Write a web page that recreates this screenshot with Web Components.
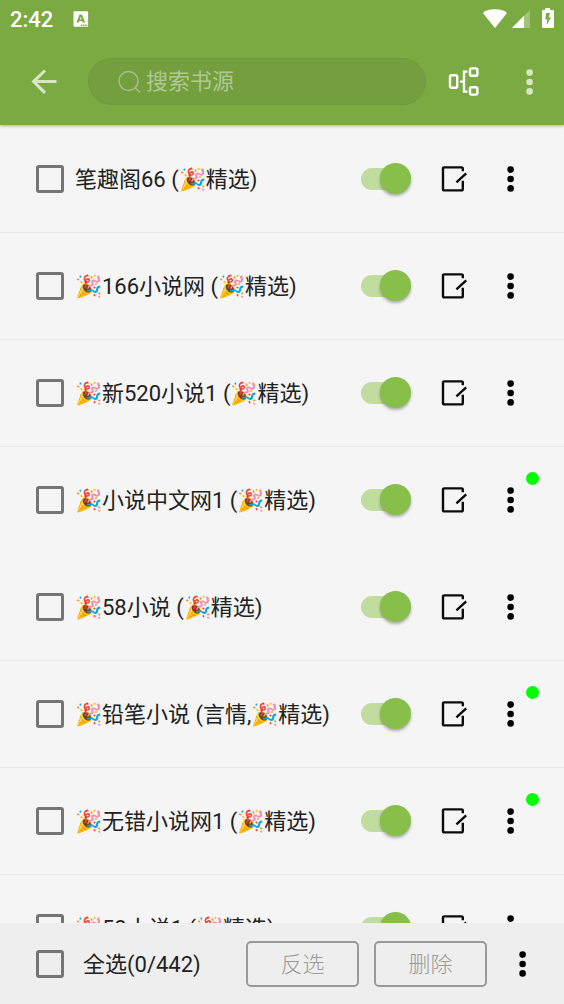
<!DOCTYPE html>
<html lang="zh-CN">
<head>
<meta charset="utf-8">
<meta name="viewport" content="width=device-width, initial-scale=1">
<title>书源管理</title>
<style>
  html, body { height: 100%; }
  body {
    margin: 0;
    background: #f5f5f5;
    color: #212121;
    font: 22px/32px Roboto, "Noto Sans CJK SC", sans-serif;
  }
</style>
</head>
<body>
<source-page></source-page>

<script>
const define = (name, html, setup) => {
  const template = document.createElement('template');
  template.innerHTML = html;
  customElements.define(name, class extends HTMLElement {
    connectedCallback() {
      if (this.shadowRoot) return;
      this.attachShadow({ mode: 'open' }).append(template.content.cloneNode(true));
      if (setup) setup(this, this.shadowRoot);
    }
  });
};

define('more-button', `
<style>
  :host { display: block; flex: none; }
  button { display: flex; align-items: center; justify-content: center; width: 32px; height: 48px; padding: 0; border: 0; background: none; color: inherit; cursor: pointer; }
</style>
<button type="button" aria-label="更多">
  <svg width="8" height="26" viewBox="0 0 8 26" fill="currentColor" aria-hidden="true">
    <circle cx="3.6" cy="3.6" r="3.3"/><circle cx="3.6" cy="13" r="3.3"/><circle cx="3.6" cy="22.4" r="3.3"/>
  </svg>
</button>`);

define('tick-box', `
<style>
  :host { display: block; min-width: 0; }
  label { display: flex; align-items: center; gap: var(--tick-gap, 11px); white-space: nowrap; }
  input { appearance: none; flex: none; box-sizing: border-box; width: 28px; height: 28px; margin: 0; border: 3px solid #757575; border-radius: 3px; }
  input:checked { background: #8bc34a; border-color: #8bc34a; }
  span { padding-top: 2px; }
</style>
<label><input type="checkbox"><span><slot></slot></span></label>`);

define('toggle-switch', `
<style>
  :host { display: block; flex: none; }
  input { appearance: none; display: flex; align-items: center; position: relative; width: 50px; height: 32px; margin: 0; }
  input::before { content: ""; width: 46px; height: 22px; border-radius: 11px; background: #c0dc9f; }
  input::after { content: ""; position: absolute; right: 0; top: 0; width: 31px; height: 31px; border-radius: 50%; background: #88bf4b; box-shadow: 0 2px 3px rgba(0,0,0,.3); }
  input:not(:checked)::before { background: #bdbdbd; }
  input:not(:checked)::after { right: 19px; background: #fafafa; }
</style>
<input type="checkbox" role="switch" checked aria-label="启用">`);

define('source-row', `
<style>
  :host { display: block; border-bottom: 1px solid #e8e8e8; }
  :host([borderless]) { border-color: transparent; }
  .row { display: flex; align-items: center; height: 106px; padding: 0 37px 0 36px; }
  tick-box { flex: 1; }
  .edit { display: flex; align-items: center; justify-content: center; width: 32px; height: 48px; margin: 0 25px 0 27px; padding: 0; border: 0; background: none; color: #0b0b0b; }
  .more { position: relative; color: #000; }
  .more i { display: none; position: absolute; right: -12px; top: -4px; width: 13px; height: 13px; border-radius: 50%; background: #0f0; }
  :host([explore]) .more i { display: block; }
</style>
<div class="row">
  <tick-box><slot></slot></tick-box>
  <toggle-switch></toggle-switch>
  <button class="edit" type="button" aria-label="编辑">
    <svg width="26" height="26" viewBox="0 0 26 26" fill="none" stroke="currentColor" stroke-width="2.4" aria-hidden="true">
      <path d="M21.8 5.2V2.6Q21.8 1.4 20.4 1.4H3.4Q2 1.4 2 2.6V23Q2 24.4 3.4 24.4H20.4Q21.8 24.4 21.8 23V14.8M15.4 16.3L25.2 7.4"/>
    </svg>
  </button>
  <div class="more"><more-button></more-button><i></i></div>
</div>`);

define('status-bar', `
<style>
  :host { display: flex; align-items: center; height: 38px; padding: 0 10px; color: #fff; font-weight: 500; }
  time { padding-top: 1px; }
  svg { display: block; flex: none; }
  .note { margin-left: 20px; }
  .system { display: flex; margin-left: auto; }
</style>
<time>2:42</time>
<svg class="note" width="16" height="16" viewBox="0 0 16 16" aria-hidden="true">
  <rect x=".5" y=".3" width="14.6" height="15.4" rx="1" fill="#fff"/>
  <path fill="#7caa42" fill-rule="evenodd" d="M6.5 3.5H9L12 11.5H9.7L9.2 10H6.2L5.7 11.5H3.5ZM7.7 5.8L6.8 8.4H8.6ZM8 13.5h1.4v1.5H8zM10.2 13.5h1.4v1.5h-1.4zM12.4 13.5h1.4v1.5h-1.4z"/>
</svg>
<div class="system">
  <svg width="72" height="22" viewBox="0 0 72 22" fill="#fff" aria-hidden="true">
    <path d="M1 5.2Q2.500 1.500 12.900 1.200Q23.300 1.500 24.800 5.200L13 20Z"/>
    <path d="M30 20L47.8 2V20Z" opacity=".3"/><path d="M30 20L42 7.8V20Z"/>
    <path fill-rule="evenodd" d="M63 0h5v2h3.2q.8 0 .8.8V19.2q0 .8-.8.8H60.8q-.8 0-.8-.8V2.8q0-.8.8-.8H63ZM64.200 5L63.200 11.500H65.200L64.700 17.200L69 9.400H66.700L68 5Z"/>
  </svg>
</div>`);

define('search-field', `
<style>
  :host { display: block; min-width: 0; }
  label { display: flex; align-items: center; box-sizing: border-box; height: 47px; padding: 0 24px 0 29px; gap: 4px; border: 1px solid #6f993d; border-radius: 24px; background: #749f3f; }
  svg { flex: none; }
  input { flex: 1; min-width: 0; padding: 0; border: 0; outline: 0; background: none; color: #fff; font: inherit; }
  input::placeholder { color: #b0c894; opacity: 1; }
</style>
<label>
  <svg width="24" height="24" viewBox="0 0 24 24" fill="none" stroke="#aabf91" stroke-width="1.3" aria-hidden="true"><circle cx="10.500" cy="11" r="9.5"/><path d="M17.200 17.700L22 22.500"/></svg>
  <input type="text" placeholder="搜索书源" aria-label="搜索书源">
</label>`);

define('top-bar', `
<style>
  :host { display: block; flex: none; position: relative; z-index: 1; height: 125px; background: #7caa42; box-shadow: 0 1px 3px rgba(0,0,0,.3); }
  nav { display: flex; align-items: center; height: 87px; padding: 0 18px 0 28px; }
  button { flex: none; display: flex; align-items: center; justify-content: center; width: 32px; height: 48px; padding: 0; border: 0; background: none; }
  search-field { flex: 1; margin: 0 22px 0 28px; }
  more-button { margin-left: 34px; color: #d8e6c6; }
</style>
<status-bar></status-bar>
<nav>
  <button type="button" aria-label="返回">
    <svg width="26" height="26" viewBox="0 0 26 26" fill="none" stroke="#d8e6c6" stroke-width="3" aria-hidden="true"><path d="M25.5 12.600H3M14 1.500L2.500 12.600L14 23.900"/></svg>
  </button>
  <search-field></search-field>
  <button type="button" aria-label="分组">
    <svg width="32" height="30" viewBox="0 0 32 30" fill="none" stroke="#fff" stroke-width="2.4" aria-hidden="true">
      <rect x="2" y="8.2" width="7.2" height="12.600" rx="1.6"/><rect x="22" y="1.4" width="7.4" height="7.4" rx="1.6"/><rect x="22" y="20.2" width="7.4" height="7.4" rx="1.6"/>
      <path d="M19.500 4.600H16V24.600H19.500M12 14.600H16"/>
    </svg>
  </button>
  <more-button></more-button>
</nav>`);

define('select-bar', `
<style>
  :host { display: flex; flex: none; align-items: center; height: 81px; padding: 0 25px 0 36px; background: #eee; }
  tick-box { flex: 1; --tick-gap: 19px; }
  .action { flex: none; box-sizing: border-box; width: 113px; height: 46px; margin-right: 15px; padding: 2px 0 0; border: 2px solid #999; border-radius: 5px; background: none; color: #999; font: inherit; font-weight: 300; }
  more-button { color: #000; margin-left: 5px; }
</style>
<tick-box>全选(0/442)</tick-box>
<button class="action" type="button">反选</button>
<button class="action" type="button">删除</button>
<more-button></more-button>`);

define('source-page', `
<style>
  :host { display: flex; flex-direction: column; height: 100vh; overflow: hidden; }
  main { flex: 1; min-height: 0; padding-top: 1px; overflow-y: auto; scrollbar-width: none; }
</style>
<top-bar></top-bar>
<main>
  <source-row>笔趣阁66 (🎉精选)</source-row>
  <source-row>🎉166小说网 (🎉精选)</source-row>
  <source-row>🎉新520小说1 (🎉精选)</source-row>
  <source-row explore borderless>🎉小说中文网1 (🎉精选)</source-row>
  <source-row>🎉58小说 (🎉精选)</source-row>
  <source-row explore>🎉铅笔小说 (言情,🎉精选)</source-row>
  <source-row explore>🎉无错小说网1 (🎉精选)</source-row>
  <source-row>🎉58小说1 (🎉精选)</source-row>
</main>
<select-bar></select-bar>`);
</script>
</body>
</html>
